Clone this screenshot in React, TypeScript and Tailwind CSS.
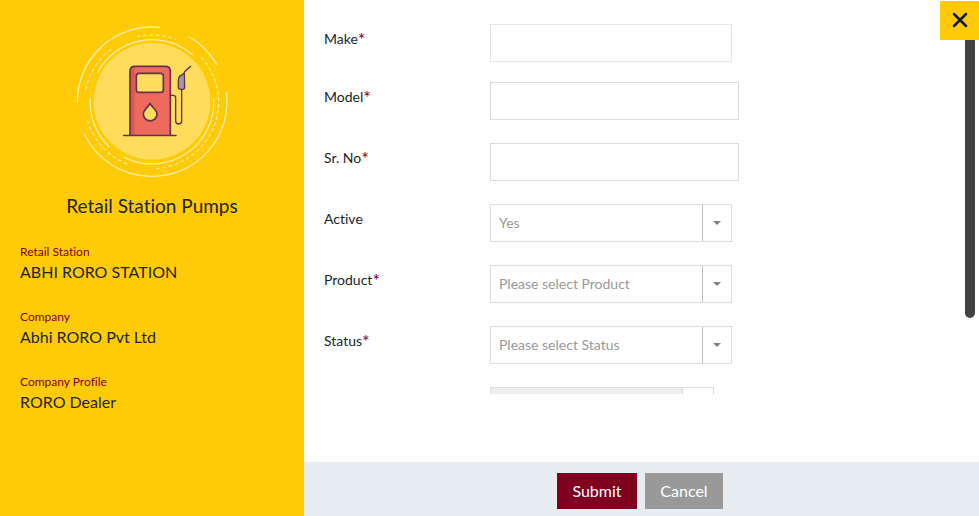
import { FormEvent, ReactNode, useState } from "react";

type Detail = {
  label: string;
  value: string;
};

const DETAILS: Detail[] = [
  { label: "Retail Station", value: "ABHI RORO STATION" },
  { label: "Company", value: "Abhi RORO Pvt Ltd" },
  { label: "Company Profile", value: "RORO Dealer" }
];

function PumpIllustration() {
  return (
    <svg viewBox="0 0 495 495" className="size-[165px]" fill="none" aria-hidden="true">
      <g stroke="#fff0a8" strokeWidth="4" strokeLinecap="round">
        <path d="M22 248A224 224 0 0 1 268 22" />
        <path d="M358 51A224 224 0 0 1 440 133" />
        <path d="M469 217A224 224 0 0 1 246 469A224 224 0 0 1 43 342" />
        <path d="M83 157A185 185 0 0 1 367 104" />
        <path d="M431 235A185 185 0 0 1 163 412" />
        <path d="M61 235A185 185 0 0 0 117 380" />
        <g strokeWidth="3.500" strokeDasharray="8 11">
          <path d="M202 50A200 200 0 0 1 315 57" />
          <path d="M395 113A200 200 0 0 1 250 446" />
          <path d="M53 303A200 200 0 0 0 172 432" />
          <path d="M48 207A200 200 0 0 1 128 84" />
        </g>
      </g>
      <circle cx="246" cy="244" r="175" fill="#ffdc5c" />
      <path d="M180 346V154q0-15 15-15h91q15 0 15 15v192z" fill="#ee6a5f" />
      <path d="M182 345V156q0-15 12-15v204z" fill="#dc5950" />
      <g stroke="#63304f" strokeWidth="5" strokeLinecap="round" strokeLinejoin="round">
        <path d="M180 346V154q0-15 15-15h91q15 0 15 15v192" />
        <path d="M161 346.500H318" />
        <rect x="199" y="160" width="81" height="57" rx="8" fill="#ffdc5c" />
        <path d="M240 250c-6 12-20 20-20 32a20.500 20.500 0 0 0 41 0c0-12-15-20-21-32z" fill="#ffdc5c" />
        <path d="M302 226h8q7 0 7 7v70q0 9 9 9t9-9v-94" strokeWidth="4" />
        <path d="M343 159l-14 10q-4 5-4 13v19q0 7 6 7h7q6 0 6-7z" fill="#9c9ca6" strokeWidth="4" />
        <path d="M343 160v-4l19-17" strokeWidth="4" />
      </g>
    </svg>
  );
}

function Field({ id, label, required, children }: { id: string; label: string; required?: boolean; children: ReactNode }) {
  return (
    <div className="flex items-start">
      <label htmlFor={id} className="w-[166px] shrink-0 pt-[5px] text-sm leading-5 text-[#212529]">
        {label}
        {required ? <span className="text-lg leading-none align-text-top text-[#80001f]">*</span> : null}
      </label>
      {children}
    </div>
  );
}

function SelectField({ id, label, required, options }: { id: string; label: string; required?: boolean; options: string[] }) {
  return (
    <Field id={id} label={label} required={required}>
      <div className="relative w-[242px]">
        <select id={id} className="block h-[38px] w-full appearance-none border border-[#dcdcdc] bg-white pr-8 pl-2 text-sm text-[#999999]">
          {options.map((option) => (
            <option key={option}>{option}</option>
          ))}
        </select>
        <span className="pointer-events-none absolute inset-y-px right-px box-content flex w-7 items-center justify-center border-l border-[#b8bec4]">
          <svg viewBox="0 0 8 4" className="h-1 w-2" aria-hidden="true">
            <path d="M0 0h8L4 4z" fill="#808080" />
          </svg>
        </span>
      </div>
    </Field>
  );
}

export default function App() {
  const [make, setMake] = useState("");
  const [model, setModel] = useState("");
  const [serial, setSerial] = useState("");

  function handleSubmit(event: FormEvent<HTMLFormElement>) {
    event.preventDefault();
  }

  return (
    <main className="relative flex h-screen w-full overflow-hidden bg-white font-['Lato',sans-serif] [font-variant-ligatures:none]">
      <aside className="w-76 shrink-0 bg-[#ffcb08] px-5 pt-5">
        <div className="flex justify-center">
          <PumpIllustration />
        </div>
        <h1 className="mt-2 text-center text-[19px] leading-[26px] text-[#212529]">Retail Station Pumps</h1>
        <dl className="mt-[23px] flex flex-col gap-[25px]">
          {DETAILS.map((detail) => (
            <div key={detail.label}>
              <dt className="text-xs leading-5 text-[#80001f]">{detail.label}</dt>
              <dd className="text-base leading-5 text-[#212529]">{detail.value}</dd>
            </div>
          ))}
        </dl>
      </aside>

      <form onSubmit={handleSubmit} className="flex min-w-0 flex-1 flex-col">
        <div className="mb-17 min-h-0 flex-1 overflow-hidden px-5 pt-6">
          <div className="mb-5">
            <Field id="make" label="Make" required>
              <input id="make" value={make} onChange={(event) => setMake(event.target.value)} className="h-[38px] w-[242px] border border-[#e6e6e6] px-2 text-sm" />
            </Field>
          </div>
          <div className="flex flex-col gap-[23px]">
            <Field id="model" label="Model" required>
              <input id="model" value={model} onChange={(event) => setModel(event.target.value)} className="h-[38px] w-[249px] border border-[#dcdcdc] px-2 text-sm" />
            </Field>
            <Field id="serial" label="Sr. No" required>
              <input id="serial" value={serial} onChange={(event) => setSerial(event.target.value)} className="h-[38px] w-[249px] border border-[#dcdcdc] px-2 text-sm" />
            </Field>
            <SelectField id="active" label="Active" options={["Yes", "No"]} />
            <SelectField id="product" label="Product" required options={["Please select Product"]} />
            <SelectField id="status" label="Status" required options={["Please select Status"]} />
            <div className="flex pl-[166px]">
              <input aria-label="Date" disabled className="h-[38px] w-[193px] border border-[#dcdcdc] bg-[#eeeeee] px-2 text-sm" />
              <button type="button" aria-label="Open calendar" className="h-[38px] w-[31px] border border-l-0 border-[#dcdcdc] bg-white" />
            </div>
          </div>
        </div>

        <footer className="flex justify-center gap-2 bg-[#e7edf1] pt-[11px] pr-[3px] pb-[7px] text-base text-white">
          <button type="submit" className="h-9 w-20 bg-[#80001f]">
            Submit
          </button>
          <button type="button" className="h-9 w-[78px] bg-[#999999]">
            Cancel
          </button>
        </footer>
      </form>

      <div className="absolute top-10 right-1 h-[278px] w-2.5 rounded-b-md bg-[#424242]" />
      <button type="button" aria-label="Close" className="absolute top-px right-0 flex size-[39px] items-center justify-center bg-[#ffcb08] pb-0.5">
        <svg viewBox="0 0 16 16" className="size-4" fill="none" aria-hidden="true">
          <path d="M2 2l12 12M14 2L2 14" stroke="#0b1a2a" strokeWidth="2.500" strokeLinecap="round" />
        </svg>
      </button>
    </main>
  );
}
